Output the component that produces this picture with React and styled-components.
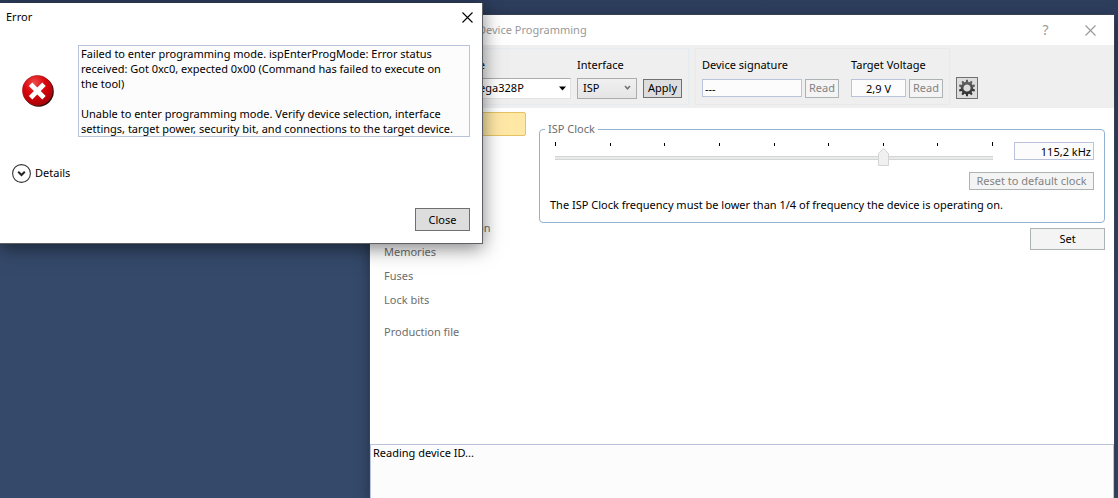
import React from 'react'
import styled, { createGlobalStyle } from 'styled-components'

const svgUrl = (w, h, body) =>
  `url("data:image/svg+xml,${encodeURIComponent(
    `<svg xmlns='http://www.w3.org/2000/svg' width='${w}' height='${h}' viewBox='0 0 ${w} ${h}'>${body}</svg>`
  )}")`

const chevron = svgUrl(7, 6, "<path d='M1 1l2.5 2.8L6 1' fill='none' stroke='#707070' stroke-width='1.5'/>")
const triangle = svgUrl(8, 5, "<path d='M0 0.5h7L3.5 4.5z' fill='#000'/>")
const thumb = svgUrl(11, 18, "<path d='M.5 17.5v-12l5-5 5 5v12z' fill='#f0f0f0' stroke='#d4d4d4'/>")

const GlobalStyle = createGlobalStyle`
  * {
    box-sizing: border-box;
  }
  body {
    margin: 0;
    overflow: hidden;
  }
  body, button, input, select, textarea {
    font-family: 'Noto Sans', 'Open Sans', sans-serif;
    font-size: 11px;
    line-height: 16px;
    color: #000;
  }
`

const Desktop = styled.div`
  display: flex;
  height: 100vh;
  padding: 15px 4px 0 370px;
  background: linear-gradient(#2d3d5c, #354a6b 55%);
`

const DeviceWindow = styled.main`
  display: flex;
  flex: 1;
  flex-direction: column;
  min-width: 0;
  background: #fff;
  box-shadow: 0 0 0 1px rgba(70, 75, 85, 0.5), 0 4px 14px rgba(0, 0, 0, 0.4);
`

const TitleBar = styled.header`
  display: flex;
  align-items: center;
  height: 30px;
  padding: 0 1px 0 6px;
  color: #999;
`

const ToolName = styled.span`
  width: 102px;
  white-space: nowrap;
`

const Title = styled.h1`
  flex: 1;
  margin: 0;
  font-size: 11px;
  font-weight: 400;
`

const CaptionButton = styled.button`
  display: flex;
  align-items: center;
  justify-content: center;
  width: ${props => (props.$wide ? '45px' : '30px')};
  height: 28px;
  padding: 0;
  border: 0;
  background: none;
  color: inherit;
  font-size: 14px;
`

const Toolbar = styled.div`
  display: flex;
  align-items: flex-end;
  gap: 6px;
  padding: 3px 0;
  background: #efefef;
`

const Group = styled.div`
  display: flex;
  align-items: flex-end;
  gap: ${props => props.$gap || '6px'};
  padding: 8px 6px 5px;
  padding-left: ${props => props.$left || '6px'};
  border: 1px solid ${props => props.$border || '#e9e9e9'};
`

const Field = styled.div`
  display: flex;
  flex-direction: column;
  gap: 4px;
  width: ${props => props.$width || 'auto'};
`

const Controls = styled.div`
  display: flex;
  align-items: center;
  gap: 3px;
  height: 22px;
`

const Select = styled.select`
  width: 100%;
  height: 21px;
  padding: 0 5px;
  appearance: none;
  border: 1px solid #acacac;
  border-radius: 0;
  background: ${chevron} no-repeat right 5px center, linear-gradient(#f0f0f0, #e5e5e5);
`

const ComboBox = styled(Select)`
  border-color: #acacac #e2e2e2 #e2e2e2;
  background: ${triangle} no-repeat right 3px center, #fff;
`

const TextBox = styled.input`
  width: ${props => props.$width};
  height: 18px;
  padding: 0 2px;
  border: 1px solid #b9c3dc;
  background: #fcfcfc;
  text-align: ${props => props.$align || 'left'};
`

const Button = styled.button`
  width: ${props => props.$width || 'auto'};
  height: ${props => props.$height || '19px'};
  padding: 0;
  border: 1px solid #707070;
  background: #ddd;
  white-space: nowrap;

  &:disabled {
    border-color: #adb2b5;
    background: #f4f4f4;
    color: #838383;
  }
`

const PlainButton = styled(Button)`
  border-color: #adb2b5;
  background: #f4f4f4;
`

const IconButton = styled(Button)`
  display: flex;
  align-items: center;
  justify-content: center;
  margin-bottom: 6px;
`

const Body = styled.div`
  display: flex;
  flex: 1;
  gap: 13px;
  min-height: 0;
  padding: 4px 9px 0 8px;
`

const Sidebar = styled.nav`
  display: flex;
  flex-direction: column;
  width: 148px;
`

const SidebarItem = styled.a`
  height: 24px;
  margin-top: ${props => (props.$spaced ? '8px' : '0')};
  padding: 3px 5px;
  border: 1px solid ${props => (props.$active ? '#e5c365' : 'transparent')};
  border-radius: 2px;
  background: ${props => (props.$active ? '#ffe8a6' : 'none')};
  color: #6d6d6d;
  text-decoration: none;
`

const Panel = styled.section`
  display: flex;
  flex: 1;
  flex-direction: column;
  align-items: flex-end;
  gap: 5px;
  min-width: 0;
  padding-top: 9px;
`

const ClockGroup = styled.fieldset`
  width: 100%;
  margin: 0;
  padding: 5px 10px 9px;
  border: 1px solid #93b1d3;
  border-radius: 4px;
`

const Legend = styled.legend`
  margin-left: -5px;
  padding: 0 3px;
  color: #6d6d6d;
`

const ClockRows = styled.div`
  display: flex;
  flex-direction: column;
  align-items: flex-end;
  gap: 6px;
`

const SliderRow = styled.div`
  display: flex;
  align-items: flex-start;
  gap: 16px;
  width: 100%;
`

const SliderBox = styled.div`
  display: flex;
  flex: 1;
  flex-direction: column;
  gap: 2px;
`

const Ticks = styled.div`
  display: flex;
  align-items: flex-end;
  justify-content: space-between;
  height: 4px;
  padding: 0 5px;
`

const Tick = styled.span`
  width: 1px;
  height: 3px;
  background: #000;

  &:first-child,
  &:last-child {
    height: 4px;
  }
`

const Slider = styled.input`
  width: 100%;
  height: 18px;
  margin: 0;
  appearance: none;
  background: linear-gradient(#d4d6d6 1px, #e7eaea 1px 3px, #d4d6d6 3px) no-repeat center 8px /
    calc(100% - 10px) 4px;

  &::-webkit-slider-thumb {
    width: 11px;
    height: 18px;
    appearance: none;
    background: ${thumb};
  }
`

const Note = styled.p`
  width: 100%;
  margin: 1px 0 0;
`

const Log = styled.textarea`
  display: block;
  width: 100%;
  height: 54px;
  padding: 0 2px;
  resize: none;
  border: 1px solid #b9c3dc;
  border-bottom: 0;
  background: #fcfcfc;
`

const Dialog = styled.div`
  position: absolute;
  top: 3px;
  left: 0;
  display: flex;
  flex-direction: column;
  width: 483px;
  border: solid #5d6064;
  border-width: 0 1px 1px 0;
  background: #fff;
  box-shadow: 0 4px 18px rgba(0, 0, 0, 0.5);
`

const DialogTitle = styled.div`
  display: flex;
  align-items: center;
  justify-content: space-between;
  height: 28px;
  padding-left: 6px;
`

const DialogBody = styled.div`
  display: flex;
  align-items: center;
  gap: 24px;
  padding: 14px 12px 26px 22px;
`

const Message = styled.textarea`
  flex: 1;
  height: 92px;
  padding: 0 2px;
  overflow: hidden;
  resize: none;
  border: 1px solid #b9c3dc;
  background: #fcfcfc;
  line-height: 15px;
`

const Details = styled.button`
  display: flex;
  align-items: center;
  align-self: flex-start;
  gap: 4px;
  height: 20px;
  margin-left: 12px;
  padding: 0;
  border: 0;
  background: none;
`

const DialogFooter = styled.div`
  display: flex;
  justify-content: flex-end;
  padding: 25px 12px 12px;
`

const CrossIcon = () => (
  <svg width="11" height="11" viewBox="0 0 11 11">
    <path d="M.5.5l10 10M10.5.5l-10 10" fill="none" stroke="currentColor" strokeWidth="1.1" />
  </svg>
)

const GearIcon = () => (
  <svg width="18" height="18" viewBox="-9 -9 18 18">
    <defs>
      <linearGradient id="gear" x1="0" y1="-8" x2="0" y2="8" gradientUnits="userSpaceOnUse">
        <stop offset="0" stopColor="#6a6a6a" />
        <stop offset="1" stopColor="#2c2c2c" />
      </linearGradient>
    </defs>
    <circle r="4.9" fill="none" stroke="url(#gear)" strokeWidth="2.6" />
    {[0, 36, 72, 108, 144, 180, 216, 252, 288, 324].map(angle => (
      <path
        key={angle}
        d="M-1.3-5.5L-.9-8.2H.9L1.3-5.5z"
        fill={angle > 90 && angle < 270 ? '#333' : '#5c5c5c'}
        transform={`rotate(${angle})`}
      />
    ))}
  </svg>
)

const ErrorIcon = () => (
  <svg width="32" height="32" viewBox="0 0 32 32">
    <defs>
      <radialGradient id="ball" cx="0.4" cy="0.25" r="0.8">
        <stop offset="0" stopColor="#ee4a4a" />
        <stop offset="0.45" stopColor="#d9060d" />
        <stop offset="1" stopColor="#a80008" />
      </radialGradient>
    </defs>
    <circle cx="16.6" cy="16.6" r="15.2" fill="#3a0a0a" />
    <circle cx="15.4" cy="15.4" r="15" fill="url(#ball)" stroke="#a31515" strokeWidth="0.6" />
    <path d="M8.6 9.2l13.4 13.6M22 9.2l-13.4 13.6" stroke="#fff" strokeWidth="4.8" />
  </svg>
)

const DetailsIcon = () => (
  <svg width="19" height="19" viewBox="0 0 19 19">
    <circle cx="9.5" cy="9.5" r="8.9" fill="#fff" stroke="#333" strokeWidth="1.1" />
    <path d="M6.2 7.8l3.3 3.2 3.3-3.2" fill="none" stroke="#222" strokeWidth="2" />
  </svg>
)

const pages = [
  { name: 'Interface settings', active: true },
  { name: 'Tool information' },
  { name: 'Board settings' },
  { name: 'Device information', spaced: true },
  { name: 'Oscillator calibration' },
  { name: 'Memories' },
  { name: 'Fuses' },
  { name: 'Lock bits' },
  { name: 'Production file', spaced: true },
]

const message = `Failed to enter programming mode. ispEnterProgMode: Error status
received: Got 0xc0, expected 0x00 (Command has failed to execute on
the tool)

Unable to enter programming mode. Verify device selection, interface
settings, target power, security bit, and connections to the target device.`

const ErrorDialog = () => (
  <Dialog role="alertdialog" aria-labelledby="error-title">
    <DialogTitle>
      <span id="error-title">Error</span>
      <CaptionButton aria-label="Close dialog">
        <CrossIcon />
      </CaptionButton>
    </DialogTitle>
    <DialogBody>
      <ErrorIcon />
      <Message readOnly aria-label="Error message" value={message} />
    </DialogBody>
    <Details>
      <DetailsIcon />
      Details
    </Details>
    <DialogFooter>
      <Button $width="55px" $height="23px">Close</Button>
    </DialogFooter>
  </Dialog>
)

export default class App extends React.Component {
  state = { clock: 6 }

  handleClock = event => {
    this.setState({ clock: Number(event.target.value) })
  }

  render() {
    return (
      <React.Fragment>
        <GlobalStyle />
        <Desktop>
          <DeviceWindow>
            <TitleBar>
              <ToolName>STK500 (COM3) -</ToolName>
              <Title>Device Programming</Title>
              <CaptionButton $wide aria-label="Help">?</CaptionButton>
              <CaptionButton $wide aria-label="Close window">
                <CrossIcon />
              </CaptionButton>
            </TitleBar>
            <Toolbar>
              <Group $left="7px" $border="#e6ebf0">
                <Field $width="67px">
                  <label htmlFor="tool">Tool</label>
                  <Controls>
                    <ComboBox id="tool">
                      <option>STK500</option>
                    </ComboBox>
                  </Controls>
                </Field>
                <Field $width="120px">
                  <label htmlFor="device">Device</label>
                  <Controls>
                    <ComboBox id="device">
                      <option>ATmega328P</option>
                    </ComboBox>
                  </Controls>
                </Field>
                <Field $width="60px">
                  <label htmlFor="interface">Interface</label>
                  <Controls>
                    <Select id="interface">
                      <option>ISP</option>
                    </Select>
                  </Controls>
                </Field>
                <Controls>
                  <Button $width="39px">Apply</Button>
                </Controls>
              </Group>
              <Group $gap="12px">
                <Field>
                  <label htmlFor="signature">Device signature</label>
                  <Controls>
                    <TextBox id="signature" $width="100px" readOnly value="---" />
                    <Button $width="34px" disabled>Read</Button>
                  </Controls>
                </Field>
                <Field>
                  <label htmlFor="voltage">Target Voltage</label>
                  <Controls>
                    <TextBox id="voltage" $width="55px" $align="center" readOnly value="2,9 V" />
                    <Button $width="34px" disabled>Read</Button>
                  </Controls>
                </Field>
              </Group>
              <IconButton $width="22px" $height="22px" aria-label="Settings">
                <GearIcon />
              </IconButton>
            </Toolbar>
            <Body>
              <Sidebar>
                {pages.map(page => (
                  <SidebarItem key={page.name} href="#" $active={page.active} $spaced={page.spaced}>
                    {page.name}
                  </SidebarItem>
                ))}
              </Sidebar>
              <Panel>
                <ClockGroup>
                  <Legend>ISP Clock</Legend>
                  <ClockRows>
                    <SliderRow>
                      <SliderBox>
                        <Ticks>
                          {[0, 1, 2, 3, 4, 5, 6, 7, 8].map(n => (
                            <Tick key={n} />
                          ))}
                        </Ticks>
                        <Slider
                          type="range"
                          min="0"
                          max="8"
                          aria-label="ISP clock"
                          value={this.state.clock}
                          onChange={this.handleClock}
                        />
                      </SliderBox>
                      <TextBox $width="80px" $align="right" readOnly aria-label="Frequency" value="115,2 kHz" />
                    </SliderRow>
                    <Button $width="125px" $height="18px" disabled>Reset to default clock</Button>
                    <Note>
                      The ISP Clock frequency must be lower than 1/4 of frequency the device is operating on.
                    </Note>
                  </ClockRows>
                </ClockGroup>
                <PlainButton $width="75px" $height="22px">Set</PlainButton>
              </Panel>
            </Body>
            <Log readOnly aria-label="Status log" value="Reading device ID..." />
          </DeviceWindow>
          <ErrorDialog />
        </Desktop>
      </React.Fragment>
    )
  }
}
